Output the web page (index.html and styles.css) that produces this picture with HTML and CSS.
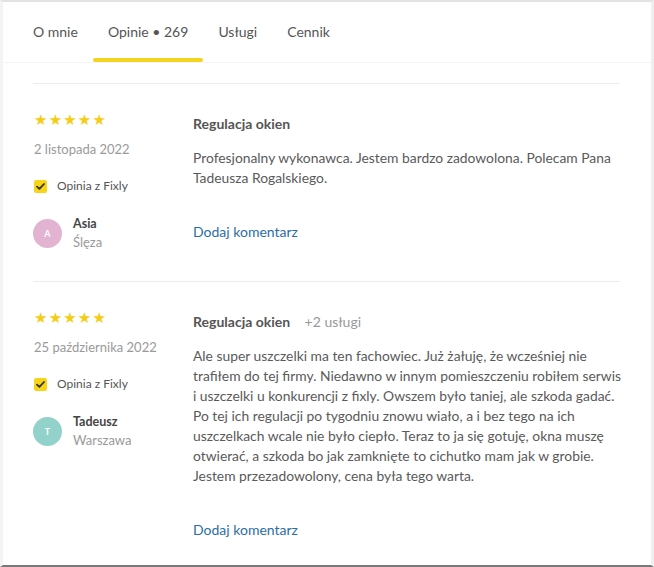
FILE: index.html
```
<!DOCTYPE html>
<html lang="pl">

<head>
    <meta charset="UTF-8">
    <title>Opinie</title>
    <link rel="stylesheet" href="styles.css">
</head>

<body>
    <div class="page">
        <div class="tabs">
            <div class="tab">O mnie</div>
            <div class="tab active">Opinie &bull; 269</div>
            <div class="tab">Usługi</div>
            <div class="tab">Cennik</div>
        </div>

        <div class="reviews">
            <div class="review">
                <div class="meta">
                    <div class="stars">
                        <span>&#9733;</span><span>&#9733;</span><span>&#9733;</span><span>&#9733;</span><span>&#9733;</span>
                    </div>
                    <div class="date">2 listopada 2022</div>
                    <div class="fixly">
                        <span class="check">
                            <svg width="9" height="7" viewBox="0 0 9 7"><path d="M1 3.6 L3.4 5.8 L8 1" fill="none" stroke="#333" stroke-width="1.8" stroke-linecap="round" stroke-linejoin="round"/></svg>
                        </span>
                        Opinia z Fixly
                    </div>
                    <div class="author">
                        <div class="avatar pink">A</div>
                        <div class="who">
                            <div class="name">Asia</div>
                            <div class="city">Ślęza</div>
                        </div>
                    </div>
                </div>
                <div class="body">
                    <div class="title">Regulacja okien</div>
                    <p class="text">Profesjonalny wykonawca. Jestem bardzo zadowolona. Polecam Pana Tadeusza Rogalskiego.</p>
                    <a class="comment" href="#">Dodaj komentarz</a>
                </div>
            </div>

            <div class="review">
                <div class="meta">
                    <div class="stars">
                        <span>&#9733;</span><span>&#9733;</span><span>&#9733;</span><span>&#9733;</span><span>&#9733;</span>
                    </div>
                    <div class="date">25 października 2022</div>
                    <div class="fixly">
                        <span class="check">
                            <svg width="9" height="7" viewBox="0 0 9 7"><path d="M1 3.6 L3.4 5.8 L8 1" fill="none" stroke="#333" stroke-width="1.8" stroke-linecap="round" stroke-linejoin="round"/></svg>
                        </span>
                        Opinia z Fixly
                    </div>
                    <div class="author">
                        <div class="avatar teal">T</div>
                        <div class="who">
                            <div class="name">Tadeusz</div>
                            <div class="city">Warszawa</div>
                        </div>
                    </div>
                </div>
                <div class="body">
                    <div class="title">Regulacja okien <span class="more">+2 usługi</span></div>
                    <p class="text">Ale super uszczelki ma ten fachowiec. Już żałuję, że wcześniej nie trafiłem do tej firmy. Niedawno w innym pomieszczeniu robiłem serwis i uszczelki u konkurencji z fixly. Owszem było taniej, ale szkoda gadać. Po tej ich regulacji po tygodniu znowu wiało, a i bez tego na ich uszczelkach wcale nie było ciepło. Teraz to ja się gotuję, okna muszę otwierać, a szkoda bo jak zamknięte to cichutko mam jak w grobie. Jestem przezadowolony, cena była tego warta.</p>
                    <a class="comment" href="#">Dodaj komentarz</a>
                </div>
            </div>
        </div>
    </div>
</body>

</html>
```

FILE: styles.css
```
* {
    padding: 0;
    margin: 0;
    box-sizing: border-box;
}

body {
    font-family: Lato, "Noto Sans", sans-serif;
    color: #555;
    background: #fff;
}

.page {
    height: 567px;
    overflow: hidden;
    border-top: 2px solid #e3e3e3;
    border-left: 3px solid #f4f4f4;
    border-right: 3px solid #efefef;
    border-bottom: 2px solid #7a7a7a;
}

.tabs {
    display: flex;
    height: 61px;
    padding-left: 15px;
    border-bottom: 1px solid #f4f4f4;
}

.tabs .tab {
    position: relative;
    padding: 0 15px;
    font-size: 14px;
    line-height: 60px;
    color: #555;
}

.tabs .active::after {
    content: '';
    position: absolute;
    left: 0;
    right: 0;
    bottom: 0;
    height: 4px;
    border-radius: 2px;
    background: #f4d41c;
}

.reviews {
    padding: 20px 31px 0 30px;
}

.review {
    display: flex;
    padding: 30px 0;
    border-top: 1px solid #ececec;
}

.meta {
    width: 160px;
    flex-shrink: 0;
}

.stars {
    display: flex;
    gap: 1px;
    height: 13px;
    padding-left: 1px;
    color: #f4cd14;
    font-size: 15px;
    line-height: 13px;
}

.stars span {
    width: 13.6px;
    text-align: center;
    font-family: "DejaVu Sans", sans-serif;
}

.date {
    margin-top: 12px;
    font-size: 13px;
    line-height: 20px;
    color: #9a9a9a;
    padding-left: 1px;
}

.fixly {
    display: flex;
    align-items: center;
    margin-top: 17px;
    padding-left: 1px;
    font-size: 12px;
    line-height: 20px;
    color: #555;
}

.fixly .check {
    display: flex;
    align-items: center;
    justify-content: center;
    width: 13px;
    height: 13px;
    margin-right: 10px;
    border-radius: 2px;
    background: #f7d417;
}

.author {
    display: flex;
    align-items: center;
    margin-top: 19px;
}

.avatar {
    width: 29px;
    height: 29px;
    margin-right: 11px;
    border-radius: 50%;
    color: #fff;
    font-size: 9px;
    font-weight: bold;
    line-height: 29px;
    text-align: center;
}

.avatar.pink {
    background: #e2b4d2;
}

.avatar.teal {
    background: #93d2cb;
}

.who .name {
    font-size: 12.5px;
    font-weight: bold;
    line-height: 18px;
    color: #444;
}

.who .city {
    font-size: 13px;
    line-height: 18px;
    color: #9a9a9a;
}

.body {
    flex: 1;
}

.body .title {
    font-size: 14px;
    font-weight: bold;
    line-height: 20px;
    color: #555;
}

.body .title .more {
    margin-left: 11px;
    font-weight: normal;
    color: #999;
}

.body .text {
    margin-top: 14px;
    margin-right: -6px;
    font-size: 13.85px;
    line-height: 20px;
    color: #5a5a5a;
}

.body .comment {
    display: inline-block;
    margin-top: 34px;
    font-size: 14px;
    line-height: 20px;
    color: #2a6ea6;
    text-decoration: none;
}
```
